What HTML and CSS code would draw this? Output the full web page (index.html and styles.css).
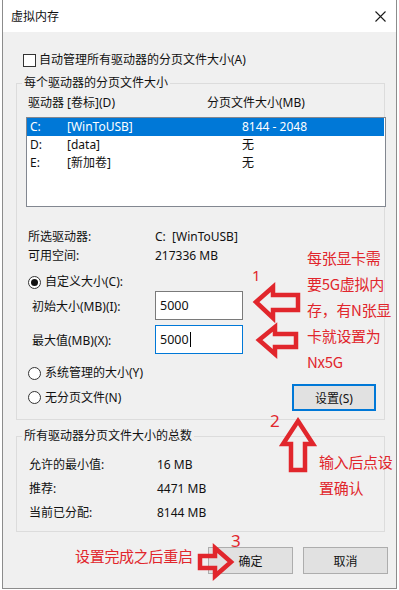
FILE: index.html
```html
<!DOCTYPE html>
<html lang="zh-CN">
<head>
    <meta charset="UTF-8">
    <title>虚拟内存</title>
    <link rel="stylesheet" href="styles.css">
</head>
<body>
<div class="page">
    <div class="window">
        <div class="titlebar">
            <span class="title">虚拟内存</span>
            <svg class="close" width="11" height="11" viewBox="0 0 11 11">
                <path d="M0.5 0.5 L10.5 10.5 M10.5 0.5 L0.5 10.5" stroke="#1a1a1a" stroke-width="1.1" fill="none"/>
            </svg>
        </div>

        <div class="content">
            <div class="check-row">
                <span class="checkbox"></span>
                <span>自动管理所有驱动器的分页文件大小(A)</span>
            </div>

            <div class="group drives">
                <div class="group-title">每个驱动器的分页文件大小</div>
                <div class="list-head">
                    <span class="head-drive">驱动器 [卷标](D)</span>
                    <span>分页文件大小(MB)</span>
                </div>
                <div class="listbox">
                    <div class="list-row selected">
                        <span class="c-drive">C:</span><span class="c-label">[WinToUSB]</span><span>8144 - 2048</span>
                    </div>
                    <div class="list-row">
                        <span class="c-drive">D:</span><span class="c-label">[data]</span><span>无</span>
                    </div>
                    <div class="list-row">
                        <span class="c-drive">E:</span><span class="c-label">[新加卷]</span><span>无</span>
                    </div>
                </div>

                <div class="info">
                    <span>所选驱动器:</span><span>C:&nbsp;&nbsp;[WinToUSB]</span>
                    <span>可用空间:</span><span>217336 MB</span>
                </div>

                <div class="radio-row first">
                    <span class="radio checked"></span>
                    <span>自定义大小(C):</span>
                </div>
                <div class="field-row">
                    <span class="field-label">初始大小(MB)(I):</span>
                    <div class="input">5000</div>
                </div>
                <div class="field-row second">
                    <span class="field-label">最大值(MB)(X):</span>
                    <div class="input focus">5000<span class="caret"></span></div>
                </div>
                <div class="radio-row">
                    <span class="radio"></span>
                    <span>系统管理的大小(Y)</span>
                </div>
                <div class="radio-row last">
                    <div class="radio-pair">
                        <span class="radio"></span>
                        <span>无分页文件(N)</span>
                    </div>
                    <button class="btn default">设置(S)</button>
                </div>
            </div>

            <div class="group totals">
                <div class="group-title">所有驱动器分页文件大小的总数</div>
                <div class="info totals-grid">
                    <span>允许的最小值:</span><span>16 MB</span>
                    <span>推荐:</span><span>4471 MB</span>
                    <span>当前已分配:</span><span>8144 MB</span>
                </div>
            </div>

            <div class="buttons">
                <button class="btn">确定</button>
                <button class="btn">取消</button>
            </div>
        </div>
    </div>

    <!-- red annotations drawn over the screenshot -->
    <div class="notes">
        <svg class="arrows" width="399" height="590" viewBox="0 0 399 590">
            <g fill="none" stroke="#e1262c" stroke-width="4.5" stroke-linejoin="miter">
                <polygon points="256,302 273,287 273,295 298,295 298,310 273,310 273,318"/>
                <polygon points="259,340 275,327 275,334 296,334 296,347 275,347 275,354"/>
                <polygon points="298,421 313,444 305,444 305,470 291,470 291,444 283,444"/>
                <polygon points="231,562 215,548 215,556 200,556 200,568 215,568 215,576"/>
            </g>
        </svg>
        <span class="num n1">1</span>
        <span class="num n2">2</span>
        <span class="num n3">3</span>
        <div class="note note-card">每张显卡需<br>要5G虚拟内<br>存，有N张显<br>卡就设置为<br>Nx5G</div>
        <div class="note note-set">输入后点设<br>置确认</div>
        <div class="note note-reboot">设置完成之后重启</div>
    </div>
</div>
</body>
</html>
```

FILE: styles.css
```css
body {
    margin: 0;
    background: #fff;
    font-family: 'Noto Sans', 'Noto Sans CJK SC', sans-serif;
    font-size: 12px;
    color: #111;
}
.page {
    position: relative;
    width: 399px;
    height: 590px;
    overflow: hidden;
}
.window {
    margin-left: 2px;
    width: 395px;
    height: 589px;
    box-sizing: border-box;
    border: 1px solid #8c8c8c;
    border-top: none;
    background: #f0f0f0;
}
.titlebar {
    height: 32px;
    background: #fff;
    display: flex;
    align-items: center;
    justify-content: space-between;
    padding: 0 10px 0 8px;
}
.title {
    font-size: 12px;
    color: #111;
}
.content {
    padding: 0 8px 0 13px;
}
.check-row {
    margin-top: 20px;
    height: 16px;
    line-height: 16px;
    display: flex;
    align-items: center;
    padding-left: 7px;
}
.checkbox {
    width: 11px;
    height: 11px;
    border: 1px solid #333;
    background: #fff;
    margin-right: 3px;
}
.group {
    border: 1px solid #dcdcdc;
    margin-right: 3px;
}
.drives {
    margin-top: 15px;
    padding: 0 0 8px 9px;
}
.group-title {
    width: max-content;
    margin-top: -9px;
    margin-left: -4px;
    padding: 0 2px;
    line-height: 16px;
    background: #f0f0f0;
}
.list-head {
    margin-top: 4px;
    line-height: 16px;
    display: flex;
    padding-left: 2px;
}
.head-drive {
    width: 179px;
}
.listbox {
    margin-top: 6px;
    margin-right: -2px;
    height: 90px;
    box-sizing: border-box;
    border: 1px solid #828790;
    background: #fff;
}
.list-row {
    height: 18px;
    line-height: 18px;
    display: flex;
    padding-left: 3px;
}
.list-row.selected {
    background: #0078d7;
    color: #fff;
    margin-right: 1px;
}
.c-drive {
    width: 37px;
}
.c-label {
    width: 175px;
}
.info {
    margin-top: 20px;
    display: grid;
    grid-template-columns: 127px auto;
    line-height: 19px;
    padding-left: 2px;
}
.radio-row {
    margin-top: 11px;
    height: 16px;
    line-height: 16px;
    display: flex;
    align-items: center;
    padding-left: 2px;
}
.radio-row.first {
    margin-top: 9px;
}
.radio-row.last {
    margin-top: 3px;
    height: 27px;
    justify-content: space-between;
    padding-right: 8px;
}
.radio-pair {
    display: flex;
    align-items: center;
}
.radio {
    position: relative;
    width: 11px;
    height: 11px;
    border: 1px solid #333;
    border-radius: 50%;
    background: #fff;
    margin-right: 4px;
}
.radio.checked::after {
    content: '';
    position: absolute;
    left: 2px;
    top: 2px;
    width: 7px;
    height: 7px;
    border-radius: 50%;
    background: #111;
}
.field-row {
    margin-top: 1px;
    display: flex;
    align-items: center;
    padding-left: 6px;
}
.field-row.second {
    margin-top: 5px;
}
.field-label {
    width: 123px;
}
.input {
    width: 88px;
    height: 29px;
    box-sizing: border-box;
    border: 1px solid #7a7a7a;
    background: #fff;
    padding: 0 4px;
    line-height: 25px;
    font-size: 12.5px;
    display: flex;
    align-items: center;
}
.input.focus {
    border-color: #0078d7;
}
.caret {
    width: 1px;
    height: 15px;
    background: #000;
    margin-left: 1px;
}
.btn {
    font-family: 'Noto Sans', 'Noto Sans CJK SC', sans-serif;
    font-size: 12px;
    color: #111;
    background: #e1e1e1;
    border: 1px solid #adadad;
    width: 85px;
    height: 27px;
    padding: 0;
}
.btn.default {
    width: 84px;
    border: 2px solid #0078d7;
}
.totals {
    margin-top: 16px;
    padding: 0 0 6px 12px;
}
.totals .group-title {
    margin-left: -7px;
}
.totals-grid {
    margin-top: 9px;
    grid-template-columns: 128px auto;
    line-height: 24px;
    padding-left: 0;
}
.buttons {
    margin-top: 15px;
    display: flex;
    justify-content: flex-end;
    gap: 10px;
}

/* annotations */
.notes {
    position: absolute;
    left: 0;
    top: 0;
    width: 399px;
    height: 590px;
    pointer-events: none;
    color: #e1262c;
    font-family: 'Noto Sans CJK SC', sans-serif;
    font-size: 15px;
}
.arrows {
    position: absolute;
    left: 0;
    top: 0;
}
.num {
    position: absolute;
    font-family: 'Noto Sans', sans-serif;
    font-size: 15px;
    line-height: 18px;
}
.n1 { left: 252px; top: 266px; }
.n2 { left: 270px; top: 412px; font-size: 17px; }
.n3 { left: 231px; top: 532px; font-size: 17px; }
.note {
    position: absolute;
    line-height: 26px;
    letter-spacing: -0.3px;
}
.note-card { left: 307px; top: 245px; }
.note-set { left: 319px; top: 449px; }
.note-reboot { left: 75px; top: 543px; }
```
